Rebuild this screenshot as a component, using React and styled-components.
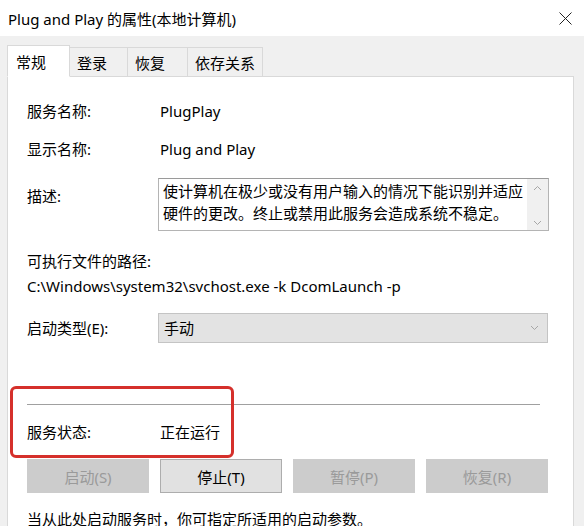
import React from 'react';
import styled, { createGlobalStyle } from 'styled-components';

const GlobalStyle = createGlobalStyle`
  html, body {
    margin: 0;
    padding: 0;
    background: #f0f0f0;
  }
  body {
    font-family: "Noto Sans", "Noto Sans CJK SC", sans-serif;
    font-size: 15px;
    color: #000;
  }
`;

const UI_FONT = `"Noto Sans", "Noto Sans CJK SC", sans-serif`;

const Window = styled.div`
  width: 584px;
  height: 526px;
  overflow: hidden;
  display: flex;
  flex-direction: column;
  background: #f0f0f0;
  font-family: ${UI_FONT};
`;

const TitleBar = styled.div`
  height: 36px;
  flex: none;
  background: #fff;
  display: flex;
  align-items: center;
  justify-content: space-between;
  padding: 0 12px 0 8px;
  font-size: 15px;
`;

const CloseButton = styled.div`
  width: 14px;
  height: 14px;
  display: flex;
  align-items: center;
  justify-content: center;
`;

const Body = styled.div`
  flex: 1;
  padding: 9px 10px 0 7px;
  display: flex;
  flex-direction: column;
`;

const TabStrip = styled.div`
  display: flex;
  align-items: flex-end;
  height: 32px;
  flex: none;
  position: relative;
  z-index: 1;
  margin-bottom: -1px;
`;

const Tab = styled.div`
  box-sizing: border-box;
  height: ${p => (p.$active ? '32px' : '30px')};
  width: ${p => p.$width}px;
  padding-left: ${p => (p.$active ? 8 : 7)}px;
  display: flex;
  align-items: center;
  background: ${p => (p.$active ? '#fff' : '#f0f0f0')};
  border: 1px solid #d9d9d9;
  border-bottom: ${p => (p.$active ? '1px solid #fff' : '1px solid #d9d9d9')};
  border-left-width: ${p => (p.$first ? 1 : 0)}px;
  font-size: 15px;
  color: #000;
`;

const Panel = styled.div`
  flex: 1;
  background: #fff;
  border: 1px solid #d9d9d9;
  border-bottom: none;
  padding: 24px 25px 0 19px;
  display: flex;
  flex-direction: column;
`;

const FieldRow = styled.div`
  display: grid;
  grid-template-columns: 131px 1fr;
  align-items: ${p => (p.$top ? 'start' : 'center')};
  margin-top: ${p => p.$gap || 0}px;
  line-height: 20px;
`;

const Label = styled.div`
  font-size: 15px;
  color: #000;
  white-space: nowrap;
  padding-top: ${p => p.$offset || 0}px;
`;

const Value = styled.div`
  font-size: 15px;
  padding-left: 2px;
`;

const TextLine = styled.div`
  font-size: 15px;
  line-height: 20px;
  margin-top: ${p => p.$gap || 0}px;
  white-space: nowrap;
`;

const DescBox = styled.div`
  box-sizing: border-box;
  height: 53px;
  border: 1px solid #b4b4b4;
  border-top-color: #9a9a9a;
  display: flex;
  background: #fff;
`;

const DescText = styled.div`
  flex: 1;
  min-width: 0;
  overflow: hidden;
  padding: 1px 4px;
  font-size: 15px;
  line-height: 22px;
  white-space: nowrap;
`;

const ScrollTrack = styled.div`
  width: 21px;
  flex: none;
  background: #f0f0f0;
  display: flex;
  flex-direction: column;
  justify-content: space-between;
  align-items: center;
  padding: 6px 0 4px;
`;

const Select = styled.div`
  box-sizing: border-box;
  height: 30px;
  background: #e3e3e3;
  border: 1px solid #c4c4c4;
  display: flex;
  align-items: center;
  justify-content: space-between;
  padding: 0 8px 0 5px;
  font-size: 15px;
`;

const StatusBlock = styled.div`
  position: relative;
  margin-top: 61px;

  &::before {
    content: '';
    position: absolute;
    top: -18px;
    left: -17px;
    width: 224px;
    height: 72px;
    box-sizing: border-box;
    border: 3px solid #d5302b;
    border-radius: 6px;
    pointer-events: none;
  }
`;

const Separator = styled.div`
  height: 1px;
  background: #a0a0a0;
  margin-right: 8px;
`;

const ButtonRow = styled.div`
  display: grid;
  grid-template-columns: repeat(4, 1fr);
  column-gap: 11px;
  margin-top: 17px;
`;

const Button = styled.div`
  box-sizing: border-box;
  height: 34px;
  display: flex;
  align-items: center;
  justify-content: center;
  font-size: 15px;
  background: ${p => (p.$disabled ? '#cccccc' : '#e1e1e1')};
  border: 1px solid ${p => (p.$disabled ? '#cccccc' : '#adadad')};
  color: ${p => (p.$disabled ? '#9a9a9a' : '#000')};
`;

const Chevron = ({ dir = 'down', color = '#a6a6a6' }) => (
  <svg width="9" height="6" viewBox="0 0 9 6">
    <path
      d={dir === 'down' ? 'M1 1 L4.5 4.5 L8 1' : 'M1 5 L4.5 1.5 L8 5'}
      fill="none"
      stroke={color}
      strokeWidth="1"
    />
  </svg>
);

const tabs = [
  { label: '常规', width: 63, active: true },
  { label: '登录', width: 58 },
  { label: '恢复', width: 60 },
  { label: '依存关系', width: 75 },
];

const buttons = [
  { label: '启动(S)', disabled: true },
  { label: '停止(T)' },
  { label: '暂停(P)', disabled: true },
  { label: '恢复(R)', disabled: true },
];

export default function App() {
  return (
    <Window>
      <GlobalStyle />
      <TitleBar>
        <span>Plug and Play 的属性(本地计算机)</span>
        <CloseButton>
          <svg width="13" height="13" viewBox="0 0 13 13">
            <path d="M0.5 0.5 L12.5 12.5 M12.5 0.5 L0.5 12.5" stroke="#222" strokeWidth="1" />
          </svg>
        </CloseButton>
      </TitleBar>
      <Body>
        <TabStrip>
          {tabs.map((t, i) => (
            <Tab key={t.label} $active={t.active} $first={i === 0} $width={t.width}>
              {t.label}
            </Tab>
          ))}
        </TabStrip>
        <Panel>
          <FieldRow>
            <Label>服务名称:</Label>
            <Value>PlugPlay</Value>
          </FieldRow>
          <FieldRow $gap={18}>
            <Label>显示名称:</Label>
            <Value>Plug and Play</Value>
          </FieldRow>
          <FieldRow $gap={19} $top>
            <Label $offset={8}>描述:</Label>
            <DescBox>
              <DescText>
                使计算机在极少或没有用户输入的情况下能识别并适应
                <br />
                硬件的更改。终止或禁用此服务会造成系统不稳定。
              </DescText>
              <ScrollTrack>
                <Chevron dir="up" />
                <Chevron dir="down" />
              </ScrollTrack>
            </DescBox>
          </FieldRow>
          <TextLine $gap={20}>可执行文件的路径:</TextLine>
          <TextLine $gap={5}>C:\Windows\system32\svchost.exe -k DcomLaunch -p</TextLine>
          <FieldRow $gap={17}>
            <Label>启动类型(E):</Label>
            <Select>
              <span>手动</span>
              <Chevron />
            </Select>
          </FieldRow>
          <StatusBlock>
            <Separator />
            <FieldRow $gap={17}>
              <Label>服务状态:</Label>
              <Value>正在运行</Value>
            </FieldRow>
          </StatusBlock>
          <ButtonRow>
            {buttons.map(b => (
              <Button key={b.label} $disabled={b.disabled}>
                {b.label}
              </Button>
            ))}
          </ButtonRow>
          <TextLine $gap={16}>当从此处启动服务时，你可指定所适用的启动参数。</TextLine>
        </Panel>
      </Body>
    </Window>
  );
}
